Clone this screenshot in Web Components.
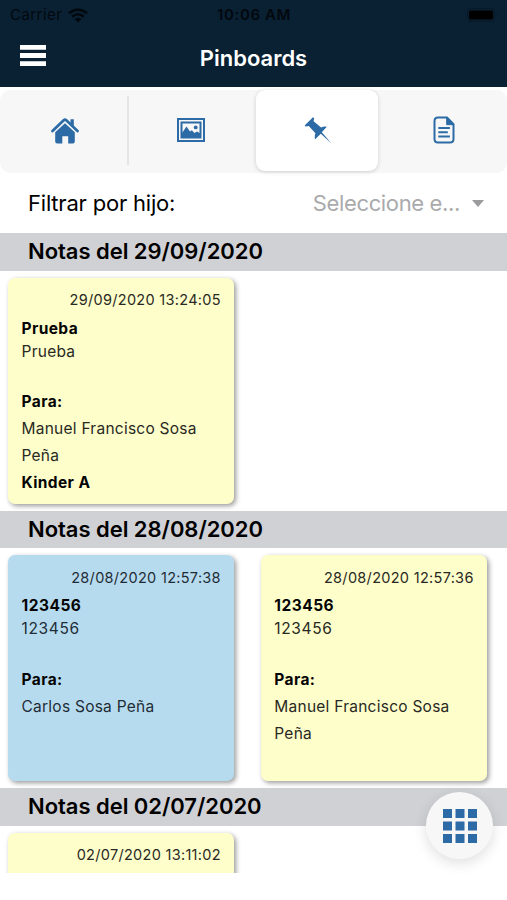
<!DOCTYPE html>
<html lang="es">
<head>
<meta charset="utf-8">
<title>Pinboards</title>
<style>
html,body{margin:0;height:100%;background:#fff;overflow:hidden}
body{font-family:Inter,"Liberation Sans",sans-serif;color:#000}
</style>
</head>
<body>
<pin-app></pin-app>
<script>
function define(name, html, setup) {
  const tpl = document.createElement('template');
  tpl.innerHTML = html;
  customElements.define(name, class extends HTMLElement {
    constructor() {
      super();
      this.attachShadow({ mode: 'open' }).append(tpl.content.cloneNode(true));
    }
    connectedCallback() { if (setup) setup(this, this.shadowRoot); }
  });
}

define('status-bar', `
<style>
:host{display:grid;grid-template-columns:1fr auto 1fr;align-items:center;height:30px;padding:0 9px 0 10px;color:#02080e;font-size:15px;line-height:30px}
.l{display:flex;align-items:center;gap:6px}
.carrier{letter-spacing:.45px}
.time{font-weight:600;letter-spacing:.6px}
.r{justify-self:end;display:flex}
svg{display:block}
</style>
<div class="l"><span class="carrier">Carrier</span>
<svg width="20" height="15" viewBox="0 0 20 15" fill="none" stroke="currentColor" stroke-width="2.700"><path d="M1 5.200C6.200 .6 13.800 .6 19 5.200M4.300 8.700C7.700 5.700 12.300 5.700 15.700 8.700"/><path d="M6.700 11.200Q10 8.500 13.300 11.200L10 14.600Z" fill="currentColor" stroke="none"/></svg></div>
<span class="time">10:06 AM</span>
<div class="r"><svg width="31" height="14" viewBox="0 0 31 14"><rect x=".7" y=".7" width="26.600" height="12.600" rx="3.500" fill="none" stroke="#061827" stroke-width="1.100"/><rect x="2" y="2.500" width="24" height="9" rx="2" fill="#000"/><path d="M29 5v4q1.500-2 0-4" fill="#061827"/></svg></div>`);

define('title-bar', `
<style>
:host{display:grid;grid-template-columns:1fr auto 1fr;align-items:center;height:56px;padding:0 20px;color:#fff}
h1{margin:0;font-size:22px;font-weight:600;line-height:56px;letter-spacing:0}
svg{display:block;margin-bottom:5px}
</style>
<svg width="26" height="21" viewBox="0 0 26 21" fill="#fff"><path d="M0 0h26v4.800H0zM0 8.100h26v4.800H0zM0 16.200h26V21H0z"/></svg>
<h1><slot></slot></h1>`);

define('tab-bar', `
<style>
:host{display:grid;grid-template-columns:129px 124px 127px 127px;height:83px;margin-top:3px;background:#f7f7f7;border-radius:11px}
</style><slot></slot>`);

define('tab-item', `
<style>
:host{display:flex;align-items:center;justify-content:center;box-sizing:border-box;color:#2c6ba6;height:69px;margin-top:6px;padding-bottom:1px}
:host([divider]){border-right:2px solid #e5e5e6;padding-left:3px}
:host([active]){background:#fff;border-radius:9px;margin:0 2px 0 3px;height:81px;padding:0 0 1px 2px;box-shadow:0 1px 4px rgba(0,0,0,.17)}
</style><slot></slot>`);

define('filter-row', `
<style>
:host{display:flex;justify-content:space-between;align-items:center;height:60px;padding:0 23px 0 28px;font-size:22px;line-height:60px;white-space:nowrap}
.label{letter-spacing:-.2px}
.select{display:flex;align-items:center;gap:12px;color:#aaaaac}
.value{letter-spacing:-.36px}
.caret{border:6.500px solid transparent;border-top:7.500px solid #9b9b9d;border-bottom:0}
</style><span class="label"><slot></slot></span><span class="select"><span class="value"><slot name="value"></slot></span><i class="caret"></i></span>`);

define('note-group', `
<style>
:host{display:block;height:277.600px}
h2{margin:0;height:37.500px;line-height:37.500px;padding-left:28px;background:#d0d1d5;font-size:22px;font-weight:600;letter-spacing:-.04px;white-space:nowrap}
.cards{display:grid;grid-template-columns:226.400px 226.400px;gap:26.400px;padding:7px 0 0 8px}
</style><h2></h2><div class="cards"><slot></slot></div>`,
(el, root) => { root.querySelector('h2').textContent = 'Notas del ' + el.getAttribute('date'); });

define('note-card', `
<style>
:host{display:block;box-sizing:border-box;height:226px;padding:8.500px 13.500px;border-radius:7px;background:#fefecb;box-shadow:2px 2px 5px rgba(0,0,0,.4);font-size:15.500px;color:#292923;letter-spacing:.25px}
:host([tone=blue]){background:#b7dbee;color:#1f2d36}
div{line-height:27px}
b{display:block;color:#050505;font-weight:700;letter-spacing:.4px}
time{display:block;text-align:right;line-height:27px;font-size:14.500px;letter-spacing:.3px}
.head{line-height:23px;margin-top:3.600px;margin-bottom:25.800px}
:host([numeric]) .head{letter-spacing:.65px}
:host([numeric]) .head b{letter-spacing:.5px}
</style>
<time></time>
<div class="head"><b><slot name="title"></slot></b><slot name="text"></slot></div>
<div><b>Para:</b><slot></slot><b><slot name="room"></slot></b></div>`,
(el, root) => {
  root.querySelector('time').textContent = el.getAttribute('time');
  if (el.hasAttribute('compact')) root.querySelectorAll('div').forEach(d => d.remove());
});

define('grid-button', `
<style>
:host{position:absolute;left:426px;top:792px;width:67px;height:67px;border-radius:50%;background:#f7f7f8;box-shadow:0 4px 14px rgba(0,0,0,.13);display:flex;align-items:center;justify-content:center}
</style>
<svg width="36" height="36" viewBox="0 0 36 36" fill="#2c6ba6"><path d="M1 1h9v9H1zM13.500 1h9v9h-9zM26 1h9v9h-9zM1 13.500h9v9H1zM13.500 13.500h9v9h-9zM26 13.500h9v9h-9zM1 26h9v9H1zM13.500 26h9v9h-9zM26 26h9v9h-9z"/></svg>`);

define('pin-app', `
<style>
:host{display:block;position:relative;width:507px;height:900px;overflow:hidden;background:#fff}
header{background:#0a2133;height:87px}
main{height:640px;overflow:hidden}
svg{display:block}
</style>
<header><status-bar></status-bar><title-bar>Pinboards</title-bar></header>
<tab-bar>
<tab-item divider><svg width="28" height="27" viewBox="0 0 28 27"><path d="M1.500 14L12.700 3.300Q14 2.200 15.300 3.300L26.500 14" fill="none" stroke="currentColor" stroke-width="2.700" stroke-linecap="round" stroke-linejoin="round"/><path d="M19.500 2.200h3.300v7.200l-3.300-3.200z" fill="currentColor"/><path d="M4.200 15.200L14 6.200l9.800 9V24.500q0 2-2 2h-4.600v-7.300h-5.900v7.300H6.200q-2 0-2-2z" fill="currentColor"/></svg></tab-item>
<tab-item><svg width="28" height="24" viewBox="0 0 28 24"><path d="M1 1h26v22H1z" fill="none" stroke="currentColor" stroke-width="2"/><path d="M4.500 4.500h19v15h-19z" fill="#f7f7f7" stroke="currentColor" stroke-width="2"/><path d="M5 19v-4l4.500-6.500 3.500 5 1.800-1.200 2.700 2.700 2.500-1.500 3.500 2V19z" fill="currentColor"/><circle cx="18.700" cy="9.400" r="1.900" fill="currentColor"/></svg></tab-item>
<tab-item active><svg width="28" height="28" viewBox="0 0 28 28" fill="currentColor"><path d="M9 1.200L.6 9.600l1 .8 3.200-.3 6.600 7.200q-1.200 3-.5 6.200l5.900-5.800L27.500 27.600 17.800 16.200l5-5.500q-3.300-.5-5.700.9L9.600 5.300l.5-3.300z"/></svg></tab-item>
<tab-item><svg width="22" height="28" viewBox="0 0 22 28" fill="none" stroke="currentColor" stroke-width="2"><path d="M5 1.500h9l6.500 6.700V23q0 3.500-3.500 3.500H5Q1.500 26.500 1.500 23V5Q1.500 1.500 5 1.500z"/><path d="M13.700 1.500v7.200h6.800z" fill="currentColor" stroke-width="1"/><path d="M5.300 12h11.600M5.300 16.200h9.500M5.300 20.400h11.600"/></svg></tab-item>
</tab-bar>
<filter-row>Filtrar por hijo:<span slot="value">Seleccione e...</span></filter-row>
<main>
<note-group date="29/09/2020"><note-card time="29/09/2020 13:24:05"><span slot="title">Prueba</span><span slot="text">Prueba</span>Manuel Francisco Sosa Peña<span slot="room">Kinder A</span></note-card></note-group>
<note-group date="28/08/2020"><note-card numeric tone="blue" time="28/08/2020 12:57:38"><span slot="title">123456</span><span slot="text">123456</span>Carlos Sosa Peña</note-card><note-card numeric time="28/08/2020 12:57:36"><span slot="title">123456</span><span slot="text">123456</span>Manuel Francisco Sosa Peña</note-card></note-group>
<note-group date="02/07/2020"><note-card compact time="02/07/2020 13:11:02"></note-card></note-group>
</main>
<grid-button></grid-button>`);
</script>
</body>
</html>
